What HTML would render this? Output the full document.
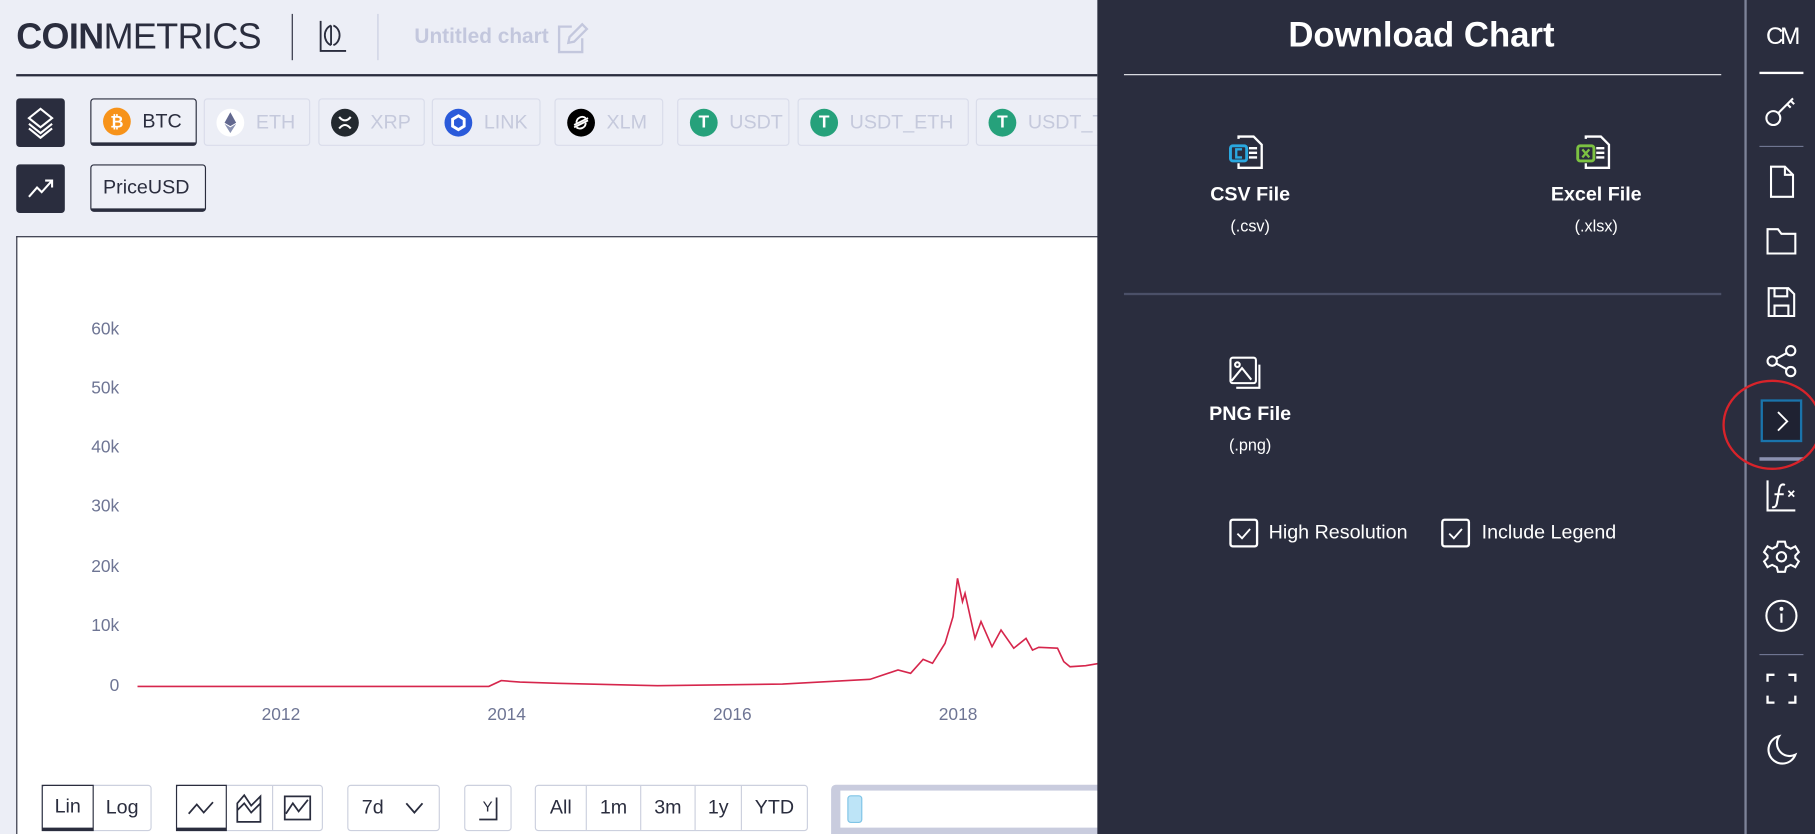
<!DOCTYPE html>
<html><head><meta charset="utf-8"><style>
*{box-sizing:border-box;margin:0;padding:0}
html,body{width:1815px;height:834px;overflow:hidden;background:#eceef6}
#w{position:absolute;left:0;top:0;width:1568px;height:720.5px;overflow:hidden;transform:scale(1.15753);transform-origin:0 0;font-family:"Liberation Sans",sans-serif;color:#2a2d3e}
.a{position:absolute}
.chip{position:absolute;top:85px;height:41px;border:1px solid #d9dcea;border-radius:3px;color:#c5c9dc;font-size:17px;display:flex;align-items:center;padding-left:10px;gap:10px}
.chip i{display:inline-block;width:24px;height:24px;border-radius:50%}
.sel{border:1px solid #2a2d3e;border-bottom:3px solid #2a2d3e;color:#2a2d3e;background:#eef0f7}
.sq{position:absolute;left:14px;width:42px;height:42px;background:#2a2d3e;border-radius:3px}
.btn{position:absolute;top:678px;height:40px;border:1px solid #ccd0de;border-radius:3px;font-size:17px;display:flex;align-items:center;background:#fff}
.btn span{height:100%;display:flex;align-items:center;justify-content:center;border-right:1px solid #ccd0de}
.btn span:last-child{border-right:none}
.yl{position:absolute;right:1465px;font-size:15px;color:#6e7594}
.xl{position:absolute;top:609px;font-size:15px;color:#6e7594}
.wt{color:#fff;position:absolute;text-align:center}
.ic{position:absolute;left:1522px;width:34px;height:34px}
.hl{position:absolute;left:1520px;width:38px;height:1px;background:#6f7590}
</style></head><body><div id="w">
<div class="a" style="left:14px;top:14px;font-size:31px;letter-spacing:-0.5px"><b style="font-weight:700">COIN</b><span style="font-weight:300;color:#2a2d3e">METRICS</span></div>
<div class="a" style="left:252px;top:12px;width:1px;height:40px;background:#2a2d3e"></div>
<svg class="a" style="left:274px;top:16px" width="28" height="32" viewBox="0 0 28 32" fill="none" stroke="#2a2d3e" stroke-width="1.6"><path d="M3 2v26h22"/><path d="M12 6a8 9 0 0 0 0 17M14 6a8 9 0 0 1 0 17M12 6v17"/></svg>
<div class="a" style="left:326px;top:12px;width:1px;height:40px;background:#c9cde0"></div>
<div class="a" style="left:358px;top:21px;font-size:18px;font-weight:700;color:#c3c7dd">Untitled chart</div>
<svg class="a" style="left:480px;top:18px" width="30" height="30" viewBox="0 0 30 30" fill="none" stroke="#c3c7dd" stroke-width="2"><path d="M14 5H3v22h20V15"/><path d="M23 3l4 4-11 11-5 1 1-5z"/></svg>
<div class="a" style="left:14px;top:64px;width:934px;height:2px;background:#2a2d3e"></div>
<div class="sq" style="top:85px"><svg width="42" height="42" viewBox="0 0 42 42" fill="none" stroke="#fff" stroke-width="1.8"><path d="M21 9l10 8-10 8-10-8z"/><path d="M11 22l10 8 10-8"/><path d="M11 26l10 8 10-8"/></svg></div>
<div class="chip sel" style="left:78px;width:92px"><i style="background:#f7931a;color:#fff;font-size:14px;font-style:normal;font-weight:700;text-align:center;line-height:24px">₿</i>BTC</div>
<div class="chip" style="left:176px;width:92px"><i style="background:#fff;position:relative"><svg width="24" height="24" viewBox="0 0 24 24"><path d="M12 3l5 9-5 3-5-3z" fill="#62688f"/><path d="M12 16l5-3-5 8-5-8z" fill="#8a92b2"/></svg></i>ETH</div>
<div class="chip" style="left:275px;width:92px"><i style="background:#23292f"><svg width="24" height="24" viewBox="0 0 24 24" fill="none" stroke="#fff" stroke-width="1.8"><path d="M7 7q5 6 10 0M7 17q5-6 10 0"/></svg></i>XRP</div>
<div class="chip" style="left:373px;width:94px"><i style="background:#2a5ada"><svg width="24" height="24" viewBox="0 0 24 24" fill="none" stroke="#fff" stroke-width="2.5"><path d="M12 6l5 3v6l-5 3-5-3V9z"/></svg></i>LINK</div>
<div class="chip" style="left:479px;width:94px"><i style="background:#000"><svg width="24" height="24" viewBox="0 0 24 24" fill="none" stroke="#fff" stroke-width="1.6"><path d="M6 14l12-6M6 16l12-6M8 12a5 5 0 0 1 8-4M16 12a5 5 0 0 1-8 4"/></svg></i>XLM</div>
<div class="chip" style="left:585px;width:97px"><i style="background:#26a17b;color:#fff;font-style:normal;font-weight:700;text-align:center;line-height:24px;font-size:15px">T</i>USDT</div>
<div class="chip" style="left:689px;width:148px"><i style="background:#26a17b;color:#fff;font-style:normal;font-weight:700;text-align:center;line-height:24px;font-size:15px">T</i>USDT_ETH</div>
<div class="chip" style="left:843px;width:140px"><i style="background:#26a17b;color:#fff;font-style:normal;font-weight:700;text-align:center;line-height:24px;font-size:15px">T</i>USDT_TRX</div>
<div class="sq" style="top:142px"><svg width="42" height="42" viewBox="0 0 42 42" fill="none" stroke="#fff" stroke-width="1.8"><path d="M11 28l7-8 4 4 9-10M25 14h6v6"/></svg></div>
<div class="chip sel" style="left:78px;top:142px;width:100px;color:#2a2d3e">PriceUSD</div>
<div class="a" style="left:14px;top:204px;width:950px;height:540px;background:#fff;border:1px solid #2a2d3e;border-bottom:none"></div>
<div class="yl" style="top:276px">60k</div><div class="yl" style="top:327px">50k</div><div class="yl" style="top:378px">40k</div><div class="yl" style="top:429px">30k</div><div class="yl" style="top:481px">20k</div><div class="yl" style="top:532px">10k</div><div class="yl" style="top:584px">0</div>
<div class="xl" style="left:226px">2012</div><div class="xl" style="left:421px">2014</div><div class="xl" style="left:616px">2016</div><div class="xl" style="left:811px">2018</div>
<svg class="a" style="left:0;top:0" width="950" height="720"><path fill="none" stroke="#d6264c" stroke-width="1.4" d="M118.8 593L422.3 593 433 588 449.2 589.2 481.6 590.3 568 592.4 676 591 751.6 586.9 775.8 578.8 786.7 581.7 797.5 569.6 805.6 573 816.4 555.8 823.3 532.8 827.2 499.6 831.5 519.8 833.7 512.6 842.3 551.5 847.5 537 857 558.7 864.8 544.3 875.8 560 886.4 551.5 892 561.6 897.4 559.2 913.6 560 919 571.6 924.4 576 937.9 575.1 950 573"/></svg>
<div class="btn" style="left:36px;width:95px"><span style="width:45px;border:1px solid #2a2d3e;border-bottom:3px solid #2a2d3e;margin:-1px 0 -1px -1px;height:40px">Lin</span><span style="width:49px">Log</span></div>
<div class="btn" style="left:152px;width:127px"><span style="width:44px;border:1px solid #2a2d3e;border-bottom:3px solid #2a2d3e;margin:-1px 0 -1px -1px;height:40px"><svg width="26" height="20" fill="none" stroke="#2a2d3e" stroke-width="1.5"><path d="M2 16l7-8 6 7 8-9"/></svg></span><span style="width:40px"><svg width="26" height="28" fill="none" stroke="#2a2d3e" stroke-width="1.5"><path d="M2 26V10l6-7 6 9 8-8v22zM2 16l6-6 6 8 8-8"/></svg></span><span style="width:42px"><svg width="26" height="26" fill="none" stroke="#2a2d3e" stroke-width="1.5"><rect x="2" y="3" width="22" height="20"/><path d="M3 18l6-9 5 7 8-10"/></svg></span></div>
<div class="btn" style="left:300px;width:80px;justify-content:center;gap:18px">7d <svg width="18" height="12" fill="none" stroke="#2a2d3e" stroke-width="1.6"><path d="M2 2l7 8 7-8"/></svg></div>
<div class="btn" style="left:401px;width:41px;justify-content:center"><svg width="24" height="26" fill="none" stroke="#2a2d3e" stroke-width="1.5"><path d="M4 23h15V4"/><text x="7" y="16" font-size="13" fill="#2a2d3e" stroke="none" font-family="Liberation Sans">Y</text></svg></div>
<div class="btn" style="left:462px;width:236px"><span style="width:44px">All</span><span style="width:47px">1m</span><span style="width:47px">3m</span><span style="width:40px">1y</span><span style="width:56px">YTD</span></div>
<div class="a" style="left:718px;top:678px;width:240px;height:62px;background:#c9ccde;border-radius:4px"></div>
<div class="a" style="left:726px;top:683px;width:232px;height:32px;background:#fff"></div>
<div class="a" style="left:732px;top:687px;width:13px;height:24px;background:#bde4f7;border:1px solid #7fc4e6;border-radius:3px"></div>
<div class="a" style="left:948px;top:0;width:620px;height:740px;background:#2a2d3e"></div>
<div class="wt" style="left:948px;width:560px;top:14px;font-size:30px;font-weight:700">Download Chart</div>
<div class="a" style="left:971px;top:64px;width:516px;height:1px;background:#e8e9ef"></div>
<svg class="a" style="left:1060px;top:114px" width="36" height="36" viewBox="0 0 36 36" fill="none" stroke-width="2"><path d="M10 6V4h13l7 7v20H10v-4" stroke="#fff"/><path d="M19 14h7M19 18h7M19 22h7" stroke="#fff"/><rect x="3" y="12" width="14" height="13" rx="2" stroke="#2aa8e0" stroke-width="2.5"/><path d="M13 15h-5v7h5" stroke="#2aa8e0"/></svg>
<div class="wt" style="left:1030px;width:100px;top:158px;font-size:17px;font-weight:700">CSV File</div>
<div class="wt" style="left:1030px;width:100px;top:187px;font-size:14px">(.csv)</div>
<svg class="a" style="left:1360px;top:114px" width="36" height="36" viewBox="0 0 36 36" fill="none" stroke-width="2"><path d="M10 6V4h13l7 7v20H10v-4" stroke="#fff"/><path d="M19 14h7M19 18h7M19 22h7" stroke="#fff"/><rect x="3" y="12" width="14" height="13" rx="2" stroke="#7cc242" stroke-width="2.5"/><path d="M7 15l6 7M13 15l-6 7" stroke="#7cc242"/></svg>
<div class="wt" style="left:1329px;width:100px;top:158px;font-size:17px;font-weight:700">Excel File</div>
<div class="wt" style="left:1329px;width:100px;top:187px;font-size:14px">(.xlsx)</div>
<div class="a" style="left:971px;top:253px;width:516px;height:2px;background:#4b5068"></div>
<svg class="a" style="left:1060px;top:306px" width="34" height="34" viewBox="0 0 34 34" fill="none" stroke="#fff" stroke-width="1.8"><rect x="3" y="3" width="22" height="22" rx="2"/><circle cx="9" cy="9" r="2"/><path d="M4 23l9-11 8 10"/><path d="M28 9v20H8"/></svg>
<div class="wt" style="left:1030px;width:100px;top:348px;font-size:17px;font-weight:700">PNG File</div>
<div class="wt" style="left:1030px;width:100px;top:376px;font-size:14px">(.png)</div>
<div class="a" style="left:1062px;top:448px;width:25px;height:25px;border:2px solid #fff;border-radius:3px"><svg width="21" height="21" fill="none" stroke="#fff" stroke-width="1.6"><path d="M5 11l4 4 7-8"/></svg></div>
<div class="wt" style="left:1096px;top:450px;font-size:17px">High Resolution</div>
<div class="a" style="left:1245px;top:448px;width:25px;height:25px;border:2px solid #fff;border-radius:3px"><svg width="21" height="21" fill="none" stroke="#fff" stroke-width="1.6"><path d="M5 11l4 4 7-8"/></svg></div>
<div class="wt" style="left:1280px;top:450px;font-size:17px">Include Legend</div>
<div class="a" style="left:1507px;top:0;width:2px;height:740px;background:#7d8399"></div>
<div class="wt" style="left:1520px;width:38px;top:20px;font-size:21px;letter-spacing:-3px">CM</div>
<div class="a" style="left:1520px;top:62px;width:38px;height:2px;background:#fff"></div>
<svg class="ic" style="top:78px" viewBox="0 0 34 34" fill="none" stroke="#fff" stroke-width="1.8"><circle cx="10" cy="24" r="6"/><path d="M14 20l13-13M22 12l3 3M25 9l3 3"/></svg>
<div class="hl" style="top:126px"></div>
<svg class="ic" style="top:140px" viewBox="0 0 34 34" fill="none" stroke="#fff" stroke-width="1.8"><path d="M8 4h12l7 7v19H8z"/><path d="M20 4v7h7"/></svg>
<svg class="ic" style="top:191px" viewBox="0 0 34 34" fill="none" stroke="#fff" stroke-width="1.8"><path d="M5 7h9l3 4h12v17H5z"/></svg>
<svg class="ic" style="top:244px" viewBox="0 0 34 34" fill="none" stroke="#fff" stroke-width="1.8"><path d="M6 5h17l5 5v19H6z"/><path d="M11 5v7h11V5M11 29v-9h12v9"/></svg>
<svg class="ic" style="top:295px" viewBox="0 0 34 34" fill="none" stroke="#fff" stroke-width="1.8"><circle cx="9" cy="17" r="4"/><circle cx="25" cy="8" r="4"/><circle cx="25" cy="26" r="4"/><path d="M12.5 15l9-5M12.5 19l9 5"/></svg>
<div class="a" style="left:1521px;top:345px;width:36px;height:37px;border:2px solid #1a74ac;background:#1f2232"></div>
<svg class="a" style="left:1530px;top:353px" width="20" height="22" fill="none" stroke="#fff" stroke-width="1.6"><path d="M6 3l8 8-8 8"/></svg>
<div class="a" style="left:1520px;top:395px;width:38px;height:3px;background:#8b91b0"></div>
<div class="a" style="left:1488px;top:328px;width:86px;height:78px;border:2px solid #d8232a;border-radius:50%"></div>
<svg class="ic" style="top:411px" viewBox="0 0 34 34" fill="none" stroke="#fff" stroke-width="1.8"><path d="M5 4v26h24"/><path d="M20 8q-4-2-5 4l-2 12q-1 4-4 3M11 16h8"/><path d="M23 13l5 5M28 13l-5 5" stroke-width="1.5"/></svg>
<svg class="ic" style="top:464px" viewBox="0 0 34 34" fill="none" stroke="#fff" stroke-width="1.8"><circle cx="17" cy="17" r="4"/><path d="M14 4h6l1 4 4 2 4-2 3 5-3 3v2l3 3-3 5-4-2-4 2-1 4h-6l-1-4-4-2-4 2-3-5 3-3v-2l-3-3 3-5 4 2 4-2z"/></svg>
<svg class="ic" style="top:515px" viewBox="0 0 34 34" fill="none" stroke="#fff" stroke-width="1.8"><circle cx="17" cy="17" r="13"/><path d="M17 15v8"/><circle cx="17" cy="11" r="0.8" fill="#fff"/></svg>
<div class="hl" style="top:565px"></div>
<svg class="ic" style="top:578px" viewBox="0 0 34 34" fill="none" stroke="#fff" stroke-width="2"><path d="M5 11V5h6M23 5h6v6M29 23v6h-6M11 29H5v-6"/></svg>
<svg class="ic" style="top:631px" viewBox="0 0 34 34" fill="none" stroke="#fff" stroke-width="1.8"><path d="M15 5a12 12 0 1 0 14 16A11 11 0 0 1 15 5z"/></svg>
</div></body></html>
